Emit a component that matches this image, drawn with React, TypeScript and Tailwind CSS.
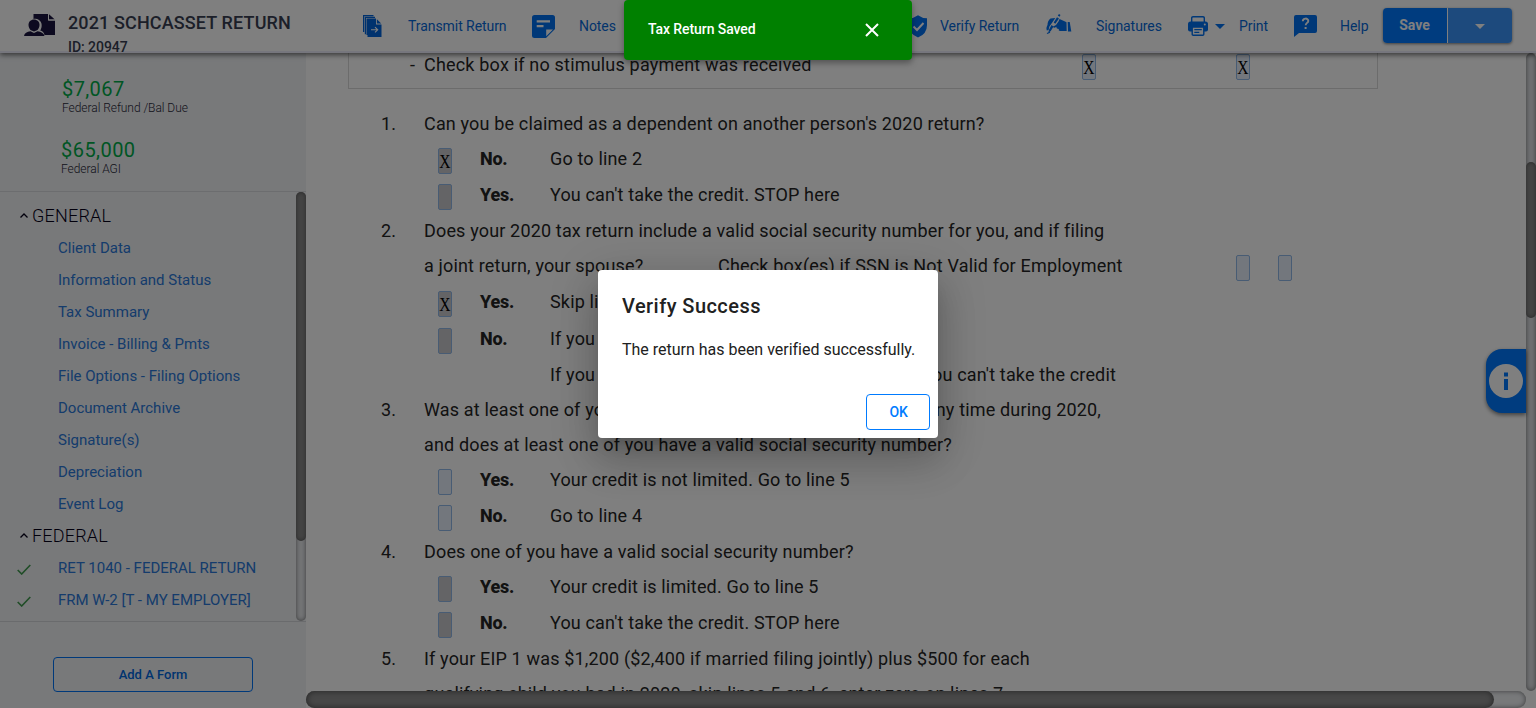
import React from "react";

type Choice = { checked?: boolean; disabled?: boolean };

function CheckCell({ checked, disabled }: Choice) {
  return (
    <span
      className={`flex h-[26px] w-[14px] shrink-0 items-center justify-center rounded-[2px] border border-[#90b8e8] ${
        disabled ? "bg-[#c8c8cc]" : "bg-[#e6eefa]"
      }`}
    >
      {checked ? (
        <span className="block scale-x-[0.82] font-['Liberation_Serif',serif] text-[19px] font-normal leading-none tracking-normal text-black">X</span>
      ) : null}
    </span>
  );
}

function Question({ n, h, children }: { n?: string; h: string; children: React.ReactNode }) {
  return (
    <div className={`flex shrink-0 items-start ${h}`}>
      <span className="w-[43px] shrink-0">{n}</span>
      <span>{children}</span>
    </div>
  );
}

function Answer({ h, label, box, children }: { h: string; label?: string; box?: Choice; children: React.ReactNode }) {
  return (
    <div className={`flex shrink-0 items-start pl-[57px] ${h}`}>
      <span className="mt-px w-[42px] shrink-0">{box && <CheckCell {...box} />}</span>
      <span className="w-[70px] shrink-0 font-extrabold tracking-[-0.25px]">{label}</span>
      <span>{children}</span>
    </div>
  );
}

function ClientIcon() {
  return (
    <svg width="32" height="24" viewBox="0 0 32 24" fill="#1b1540">
      <path d="M9.500 1H24v6.500h7V22H20.500c-.5-2.500-2-4-4.300-4.500 2.300-3.500 2-8.500-1.200-10.500-1.800-1.200-3.500-1.500-5.500-1z" />
      <path d="M25 1.200 30.800 6.500H25z" />
      <path d="M24.500 1v6H31" fill="none" stroke="#fff" strokeWidth="1" />
      <path d="M10 6.500c3.200 0 5.500 2.300 5.500 5.500 0 2-1 4-2.500 5.200l-3 1.300-3-1.300C5.500 16 4.500 14 4.500 12c0-3.200 2.300-5.500 5.500-5.500z" />
      <path d="M0 23c.4-3 3-4.500 6.500-4.800L10 20l3.500-1.800C17 18.500 19.800 20 20.500 23z" />
    </svg>
  );
}

function TransmitIcon() {
  return (
    <svg width="19" height="23" viewBox="0 0 19 23" fill="#0064dc">
      <path d="M0 0h10.500v1.200H1.200V17H0zM1.800 1.800H12v1.100H3V19.200H1.800zM3.500 3.600H13V9.500h5.500V22H4.500V20H3.500z" />
      <path d="M13.900 4.200 18.200 8.600H13.900z" />
      <path d="M8 14.800h6.500M12 12.200l2.700 2.600L12 17.400" fill="none" stroke="#fff" strokeWidth="1.100" />
    </svg>
  );
}

function NoteIcon() {
  return (
    <svg width="23" height="23" viewBox="0 0 23 23" fill="#0070f0">
      <path d="M2.500 0h18Q23 0 23 2.500V14L14 23H2.500Q0 23 0 20.500v-18Q0 0 2.500 0z" />
      <path d="M4.700 5.200h13.300v2.300H4.700zM4.700 10h6.800v2.300H4.700zM14.200 21.300v-6.800H21z" fill="#fff" />
    </svg>
  );
}

function ShieldIcon() {
  return (
    <svg width="20" height="23" viewBox="0 0 20 23" fill="#0070f0">
      <path d="M10 .2Q14 3.200 19 3.200V10q0 9-9 12.500Q1 19 1 10V3.200Q6 3.200 10 .2z" />
      <path d="m5.500 11.500 3.500 3.500 6.500-7" fill="none" stroke="#fff" strokeWidth="2" />
    </svg>
  );
}

function SignatureIcon() {
  return (
    <svg width="26" height="21" viewBox="0 0 26 21" fill="#0070f0">
      <path d="M11.800 1.500 13 0l1.500 1-1 1.700zM11 3.200l2 1.300-3.700 5.300-1.600-1.400zM5.500 11l2 1.500L4.800 17l-2.600 2 .8-3.300z" />
      <path d="M4.500 4.500 9.300 4 6.600 8 3.400 12.500 2.600 16 .8 16.500C0 14 .7 12.500 1.500 11 1.500 8 2.500 6 4.500 4.500z" />
      <path d="M13.500 5 18.500 7.200 20.500 8.200 20.700 17h-6.500c-1.200 0-2-.9-1.200-2-1.500.1-2.800-.7-2.600-2.200-1.700 1.200-3.300 1-3.700 0L10 11l2.500-3.500z" />
      <path d="M21.700 8h2l1.600 9.500h-3.300z" />
      <path d="m1 19.500 3-1.300" stroke="#0070f0" strokeWidth="1.200" />
    </svg>
  );
}

function PrinterIcon() {
  return (
    <svg width="20" height="20" viewBox="0 0 20 20" fill="#0070f0">
      <path d="M3.700 6V2q0-1.300 1.300-1.300h10Q16.300.7 16.300 2v4" fill="none" stroke="#0070f0" strokeWidth="1.400" />
      <path d="M2.500 5.500h15Q20 5.500 20 8v5.500q0 2-2 2H2q-2 0-2-2V8q0-2.500 2.500-2.500z" />
      <path d="M4.200 11h11.600v7.200q0 1.100-1.100 1.100H5.300q-1.100 0-1.100-1.100z" fill="#fff" stroke="#0070f0" strokeWidth="1.400" />
      <path d="M6.300 13.700h7.500M6.300 16.300h5" stroke="#0070f0" strokeWidth="1.300" />
      <circle cx="16.800" cy="8.600" r="1" fill="#fff" />
    </svg>
  );
}

function HelpIcon() {
  return (
    <svg width="23" height="22" viewBox="0 0 23 22" fill="#0070f0">
      <path d="M2 0h19q2 0 2 2v14q0 2-2 2H5l-5 4V2Q0 0 2 0z" />
      <path d="M8.800 6.200c0-3.500 5.500-3.400 5.500-.3 0 2-2.600 2-2.600 4.300" fill="none" stroke="#fff" strokeWidth="1.900" />
      <path d="M10.600 12h2v2h-2z" fill="#fff" />
    </svg>
  );
}

function Caret({ className }: { className?: string }) {
  return (
    <svg width="10" height="5" viewBox="0 0 10 5" fill="currentColor" className={className}>
      <path d="M0 0h10L5 5z" />
    </svg>
  );
}

function Action({ icon, label, width, gap }: { icon: React.ReactNode; label: string; width: string; gap: string }) {
  return (
    <div className={`flex shrink-0 items-center ${width}`}>
      <span className={`flex shrink-0 items-center ${gap}`}>{icon}</span>
      <span className="whitespace-nowrap">{label}</span>
    </div>
  );
}

function Header() {
  return (
    <header className="relative z-10 flex h-[53px] shrink-0 items-start border-b-2 border-[#ececfa] bg-white shadow-[0_2px_5px_rgba(0,0,0,0.55)]">
      <div className="flex h-[51px] w-[363px] shrink-0 pl-6 pt-3">
        <span className="mr-[12px] mt-px">
          <ClientIcon />
        </span>
        <div className="whitespace-nowrap font-medium text-[#383f52]">
          <div className="text-[18px] leading-[22px] tracking-[0.13px]">2021 SCHCASSET RETURN</div>
          <div className="mt-[5px] text-sm leading-4 tracking-[-0.05px]">ID: 20947</div>
        </div>
      </div>
      <nav className="flex h-[52px] items-center text-[14px] tracking-[-0.06px] text-[#0568d8]">
        <Action icon={<TransmitIcon />} label="Transmit Return" width="w-[169px]" gap="w-[45px]" />
        <Action icon={<NoteIcon />} label="Notes" width="w-[376px]" gap="w-[47px]" />
        <Action icon={<ShieldIcon />} label="Verify Return" width="w-[138px]" gap="w-[32px]" />
        <Action icon={<span className="-mt-1"><SignatureIcon /></span>} label="Signatures" width="w-[142px]" gap="w-[50px]" />
        <Action
          icon={
            <>
              <PrinterIcon />
              <Caret className="ml-[7px] text-[#0070f0]" />
            </>
          }
          label="Print"
          width="w-[106px]"
          gap="w-[51px]"
        />
        <Action icon={<HelpIcon />} label="Help" width="w-[89px]" gap="w-[46px]" />
      </nav>
      <div className="mt-2 flex h-[35px] w-[129px] shrink-0 overflow-hidden rounded-[4px] shadow-[0_1px_3px_rgba(0,0,0,0.5)]">
        <button className="w-[64px] bg-[#0078ff] pr-px text-[14px] font-bold text-white">Save</button>
        <button className="ml-px flex flex-1 items-center justify-center bg-[#3b94fa] pt-[2px] text-white">
          <Caret />
        </button>
      </div>
    </header>
  );
}

const generalItems = [
  "Client Data",
  "Information and Status",
  "Tax Summary",
  "Invoice - Billing & Pmts",
  "File Options - Filing Options",
  "Document Archive",
  "Signature(s)",
  "Depreciation",
  "Event Log",
];

const federalItems = ["RET 1040 - FEDERAL RETURN", "FRM W-2 [T - MY EMPLOYER]"];

function Group({ title, items, done }: { title: string; items: string[]; done?: boolean }) {
  return (
    <div>
      <div className="flex h-8 items-center pb-[2px] pl-5 text-[18px] font-light tracking-[0.2px] text-[#050018]">
        <svg width="8" height="5" viewBox="0 0 8 5" fill="none" stroke="currentColor" strokeWidth="1.300" className="mr-1">
          <path d="m.5 4.500 3.500-3.500 3.500 3.500" />
        </svg>
        {title}
      </div>
      {items.map((item) => (
        <div key={item} className="flex h-8 items-center pl-[17px] text-[15px] text-[#2a78d8]">
          <span className="w-[41px]">
            {done && (
              <svg width="14" height="11" viewBox="0 0 14 11" fill="none" stroke="#3f9a4d" strokeWidth="1.600" className="mt-0.5">
                <path d="m.7 6 4 4L13.300 1" />
              </svg>
            )}
          </span>
          <span className="whitespace-nowrap">{item}</span>
        </div>
      ))}
    </div>
  );
}

function Sidebar() {
  return (
    <aside className="flex w-[306px] shrink-0 flex-col bg-[#f0f2f5]">
      <div className="h-[139px] shrink-0 border-b border-[#d8dadf] pl-[61px] pt-[25px] text-[#282838]">
        <div className="pl-px">
          <div className="text-[20px] leading-[22px] tracking-[0.4px] text-[#00ac48]">$7,067</div>
          <div className="pt-px text-[12px] font-light leading-[14px] tracking-[-0.05px]">Federal Refund /Bal Due</div>
        </div>
        <div className="mt-[24px]">
          <div className="text-[20px] leading-[22px] tracking-[0.45px] text-[#00ac48]">$65,000</div>
          <div className="pt-px text-[12px] font-light leading-[14px] tracking-[-0.05px]">Federal AGI</div>
        </div>
      </div>
      <div className="flex h-[429px] shrink-0 justify-between">
        <div className="pt-2">
          <Group title="GENERAL" items={generalItems} />
          <Group title="FEDERAL" items={federalItems} done />
        </div>
        <div className="h-full w-[10px] rounded-[6px] bg-[#e6e8eb] shadow-[inset_0_0_4px_rgba(0,0,0,0.5)]">
          <div className="h-[349px] rounded-[6px] bg-[#888] shadow-[inset_0_0_4px_rgba(0,0,0,0.4)]" />
        </div>
      </div>
      <div className="flex flex-1 justify-center border-t border-[#d4d6db] pt-[35px]">
        <button className="h-[35px] w-[200px] rounded-[4px] border border-[#0073f5] text-[13px] font-medium text-[#0068df]">
          Add A Form
        </button>
      </div>
    </aside>
  );
}

function FormPage() {
  return (
    <div className="flex h-[638px] w-[1220px] flex-col overflow-hidden pl-[42px] text-[18px] leading-6 tracking-[0.16px] text-[#242424]">
      <div className="mb-[23px] flex h-[36px] w-[1030px] shrink-0 items-start border-x border-b border-[#d8d8d8] pl-[61px]">
        <span className="w-[14px]">-</span>
        <span className="w-[658px] tracking-[0.19px]">Check box if no stimulus payment was received</span>
        <span className="mt-px w-[154px]">
          <CheckCell checked />
        </span>
        <span className="mt-px">
          <CheckCell checked />
        </span>
      </div>
      <div className="flex flex-col whitespace-nowrap pl-[33px]">
        <Question n="1." h="h-[35px]">Can you be claimed as a dependent on another person's 2020 return?</Question>
        <Answer h="h-[36px]" label="No." box={{ checked: true, disabled: true }}>Go to line 2</Answer>
        <Answer h="h-[36px]" label="Yes." box={{ disabled: true }}>You can't take the credit. STOP here</Answer>
        <Question n="2." h="h-[35px]">Does your 2020 tax return include a valid social security number for you, and if filing</Question>
        <Question h="h-[36px]">
          <span className="flex">
            <span className="w-[294px]">a joint return, your spouse?</span>
            <span className="w-[518px] tracking-[0.18px]">Check box(es) if SSN is Not Valid for Employment</span>
            <span className="mt-px flex gap-[28px]">
              <CheckCell />
              <CheckCell />
            </span>
          </span>
        </Question>
        <Answer h="h-[37px]" label="Yes." box={{ checked: true, disabled: true }}>Skip line</Answer>
        <Answer h="h-[36px]" label="No." box={{ disabled: true }}>If you</Answer>
        <Answer h="h-[35px]">
          <span className="flex w-[566px] justify-between">
            <span>If you</span>
            <span>you can't take the credit</span>
          </span>
        </Answer>
        <Question n="3." h="h-[35px]">
          <span className="flex w-[677px] justify-between">
            <span>Was at least one of you</span>
            <span>any time during 2020,</span>
          </span>
        </Question>
        <Question h="h-[35px]">and does at least one of you have a valid social security number?</Question>
        <Answer h="h-[36px]" label="Yes." box={{}}>Your credit is not limited. Go to line 5</Answer>
        <Answer h="h-[36px]" label="No." box={{}}>Go to line 4</Answer>
        <Question n="4." h="h-[35px]">Does one of you have a valid social security number?</Question>
        <Answer h="h-[36px]" label="Yes." box={{ disabled: true }}>Your credit is limited. Go to line 5</Answer>
        <Answer h="h-[36px]" label="No." box={{ disabled: true }}>You can't take the credit. STOP here</Answer>
        <Question n="5." h="h-[35px]">If your EIP 1 was $1,200 ($2,400 if married filing jointly) plus $500 for each</Question>
        <Question h="h-[35px]">qualifying child you had in 2020, skip lines 5 and 6, enter zero on lines 7</Question>
      </div>
    </div>
  );
}

export default function App() {
  return (
    <div className="relative flex h-[708px] w-[1536px] flex-col overflow-hidden bg-white font-['Roboto',sans-serif]">
      <Header />
      <div className="flex h-[655px]">
        <Sidebar />
        <main className="flex w-[1230px] flex-col">
          <div className="flex h-[638px]">
            <FormPage />
            <div className="h-full w-[10px] shrink-0 rounded-[6px] bg-[#e0e2e5] pt-[109px] shadow-[inset_0_0_5px_rgba(0,0,0,0.5)]">
              <div className="h-[156px] rounded-[6px] bg-[#888] shadow-[inset_0_0_4px_rgba(0,0,0,0.4)]" />
            </div>
          </div>
          <div className="h-[17px] w-[1220px] rounded-[9px] bg-[#f0f2f5] shadow-[inset_0_0_5px_rgba(0,0,0,0.5)]">
            <div className="h-full w-[1188px] rounded-[9px] bg-[#909090] shadow-[inset_0_0_6px_rgba(0,0,0,0.5)]" />
          </div>
        </main>
      </div>

      <div className="absolute right-[10px] top-[349px] flex h-16 w-10 items-center justify-center rounded-l-[16px] bg-[#0078ff] shadow-[0_2px_4px_rgba(0,0,0,0.5)]">
        <svg width="34" height="34" viewBox="0 0 34 34">
          <circle cx="17" cy="17" r="17" fill="#fff" />
          <path d="M15 8.500h4v4h-4zM15 15h4v11h-4z" fill="#0078ff" />
        </svg>
      </div>

      <div className="absolute inset-0 z-20 bg-black/50" />

      <div className="absolute left-[624px] top-0 z-30 flex h-[60px] w-[288px] items-center justify-between rounded-[4px] bg-[#008000] pl-6 pr-[33px] text-[14px] font-medium tracking-[-0.08px] text-white shadow-[0_3px_6px_rgba(0,0,0,0.35)]">
        <span className="-mt-[2px]">Tax Return Saved</span>
        <svg width="14" height="14" viewBox="0 0 14 14" fill="none" stroke="#fff" strokeWidth="2">
          <path d="m1 1 12 12M13 1 1 13" />
        </svg>
      </div>

      <div className="absolute left-[598px] top-[270px] z-30 flex h-[168px] w-[340px] flex-col rounded-[4px] bg-white px-2 pb-2 shadow-[0_11px_15px_-7px_rgba(0,0,0,0.2),0_24px_38px_3px_rgba(0,0,0,0.14),0_9px_46px_8px_rgba(0,0,0,0.12)]">
        <h2 className="pl-4 pt-5 text-[20px] font-medium leading-8 tracking-[0.45px] text-[#212121]">Verify Success</h2>
        <p className="mt-[16px] whitespace-nowrap pl-4 text-[16px] leading-6 tracking-[-0.01px] text-[#212121]">The return has been verified successfully.</p>
        <button className="mt-auto h-9 w-16 self-end rounded-[4px] border border-[#007bff] pl-px text-[14px] font-medium tracking-[-0.3px] text-[#007bff]">OK</button>
      </div>
    </div>
  );
}
